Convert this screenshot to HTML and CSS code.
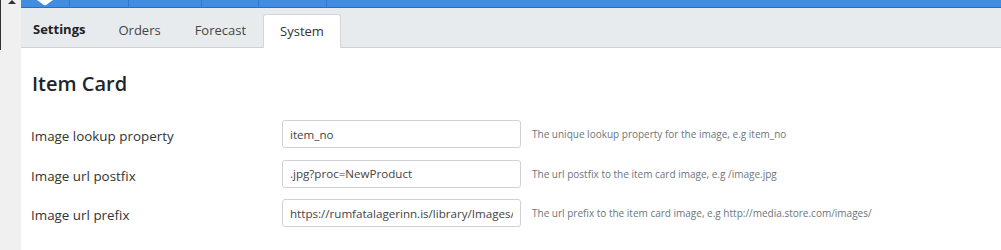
FILE: index.html
```html
<!DOCTYPE html>
<html lang="en">
<head>
    <meta charset="UTF-8">
    <title>Settings - System</title>
    <link rel="stylesheet" href="styles.css">
</head>
<body>
    <div class="page">
        <aside class="side-strip">
            <svg class="scroll-up" width="8" height="4" viewBox="0 0 8 4">
                <path d="M0 4 L4 0 L8 4 Z" fill="#333"/>
            </svg>
        </aside>

        <div class="main">
            <!-- Top app bar (clipped) -->
            <nav class="topbar">
                <div class="topbar-item first">
                    <svg class="chevron" width="16" height="6" viewBox="0 0 16 6">
                        <path d="M0 0 L16 0 L9.5 4.8 Q8 5.8 6.5 4.8 Z" fill="#fff"/>
                    </svg>
                </div>
                <div class="topbar-item w59"></div>
                <div class="topbar-item w73"></div>
                <div class="topbar-item w57"></div>
                <div class="topbar-item w68"></div>
            </nav>

            <ul class="tabs">
                <li class="tab tab-title">Settings</li>
                <li class="tab">Orders</li>
                <li class="tab">Forecast</li>
                <li class="tab active">System</li>
            </ul>

            <section class="content">
                <h2>Item Card</h2>

                <div class="form-row">
                    <label for="lookup">Image lookup property</label>
                    <input type="text" id="lookup" value="item_no">
                    <span class="hint">The unique lookup property for the image, e.g item_no</span>
                </div>
                <div class="form-row">
                    <label for="postfix">Image url postfix</label>
                    <input type="text" id="postfix" value=".jpg?proc=NewProduct">
                    <span class="hint">The url postfix to the item card image, e.g /image.jpg</span>
                </div>
                <div class="form-row">
                    <label for="prefix">Image url prefix</label>
                    <input type="text" id="prefix" value="https://rumfatalagerinn.is/library/Images/">
                    <span class="hint">The url prefix to the item card image, e.g http://media.store.com/images/</span>
                </div>
            </section>
        </div>
    </div>
</body>
</html>
```

FILE: styles.css
```css
body {
    margin: 0;
    padding: 0;
    font-family: 'Open Sans', 'Noto Sans', sans-serif;
    color: #212529;
    background: #fff;
    overflow: hidden;
}

.page {
    display: flex;
    height: 250px;
}

/* Left strip */
.side-strip {
    width: 20px;
    flex: none;
    background: #f0f0f0;
    border-right: 1px solid #f0f0f0;
    position: relative;
}

.side-strip::before {
    content: "";
    position: absolute;
    left: 0;
    top: 0;
    width: 1px;
    height: 50px;
    background: #333;
}

.scroll-up {
    position: absolute;
    left: 8px;
    top: 0;
}

.main {
    flex: 1;
    display: flex;
    flex-direction: column;
}

/* Top bar */
.topbar {
    display: flex;
    height: 7px;
    background: #428de0;
    border-bottom: 1px solid #1a72d8;
}

.topbar-item {
    border-right: 1px solid #2b7bd6;
}

.topbar-item.first {
    width: 48px;
    display: flex;
    justify-content: center;
    align-items: flex-start;
}

.w59 { width: 58px; }
.w73 { width: 72px; }
.w57 { width: 56px; }
.w68 { width: 67px; }

/* Tabs */
.tabs {
    display: flex;
    align-items: flex-end;
    list-style: none;
    margin: 0;
    padding: 0 0 0 12px;
    height: 39px;
    background: #e8ebee;
    border-bottom: 1px solid #cdd0d4;
}

.tab {
    font-size: 13px;
    color: #444;
    padding: 0 17px 8px;
    line-height: 18px;
}

.tab-title {
    font-weight: 700;
    color: #222;
    padding-left: 0;
    padding-right: 16px;
    padding-bottom: 9px;
}

.tab.active {
    background: #fff;
    border: 1px solid #d4d7da;
    border-bottom: none;
    border-radius: 3px 3px 0 0;
    margin-bottom: -1px;
    padding: 7px 16px 8px;
    color: #333;
}

/* Content */
.content {
    padding: 0 10px;
}

.content h2 {
    font-size: 20px;
    font-weight: 600;
    margin: 23px 0 23px 1px;
    line-height: 26px;
}

.form-row {
    display: flex;
    align-items: center;
    height: 28px;
    margin-bottom: 11.5px;
}

.form-row label {
    width: 251px;
    flex: none;
    padding-top: 4px;
    font-size: 13.4px;
    color: #333;
}

.form-row input {
    height: 28px;
    box-sizing: border-box;
    width: 239px;
    padding: 0 7px;
    border: 1px solid #ced1d5;
    border-radius: 3px;
    font-family: 'Open Sans', 'Noto Sans', sans-serif;
    font-size: 11.6px;
    color: #444;
}

.hint {
    margin-left: 11px;
    font-size: 10px;
    color: #6c757d;
}
```
